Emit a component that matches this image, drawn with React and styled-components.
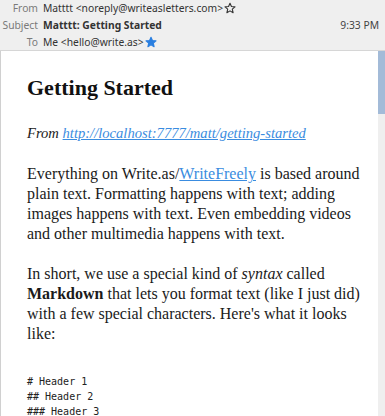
import React from "react";
import styled, { createGlobalStyle } from "styled-components";

const Global = createGlobalStyle`
  html, body { margin: 0; padding: 0; background: #ffffff; }
  body { width: 385px; height: 416px; overflow: hidden; }
`;

const Window = styled.div`
  width: 385px;
  height: 416px;
  display: flex;
  flex-direction: column;
  overflow: hidden;
`;

const Header = styled.div`
  background: #efefef;
  border-bottom: 1px solid #d6d6d6;
  height: 51px;
  font-family: "Noto Sans", "DejaVu Sans", sans-serif;
  font-size: 10.3px;
  color: #3c3c3c;
  box-sizing: border-box;
`;

const HeaderRow = styled.div`
  display: grid;
  grid-template-columns: 38px 1fr auto;
  column-gap: 5px;
  align-items: center;
  height: ${(p) => p.h}px;
  padding-right: 6px;
`;

const Label = styled.span`
  text-align: right;
  color: #7a7a7a;
`;

const Value = styled.span`
  display: flex;
  align-items: center;
  gap: 1px;
  font-weight: ${(p) => (p.bold ? 700 : 400)};
  color: #333;
  white-space: nowrap;
`;

const Time = styled.span`
  color: #444;
`;

const Body = styled.div`
  flex: 1;
  display: flex;
  min-height: 0;
  border-left: 1px solid #d0d0d0;
`;

const Content = styled.div`
  flex: 1;
  padding: 23px 0 0 26px;
  background: #fff;
  color: #1a1a1a;
  overflow: hidden;
`;

const Title = styled.h1`
  font-family: "Liberation Serif", serif;
  font-size: 22px;
  font-weight: 700;
  margin: 0 0 21px;
  line-height: 28px;
  color: #111;
`;

const Byline = styled.p`
  font-family: "Liberation Serif", serif;
  font-style: italic;
  font-size: 14.6px;
  margin: 0 0 21px;
  line-height: 20px;
`;

const Link = styled.a`
  color: #3a8ce0;
  text-decoration: underline;
`;

const Para = styled.p`
  font-family: "Liberation Serif", serif;
  font-size: 16px;
  line-height: 20px;
  margin: 0 0 20px;
  white-space: nowrap;
`;

const Code = styled.pre`
  font-family: "DejaVu Sans Mono", monospace;
  font-size: 10px;
  line-height: 15px;
  margin: 0;
  padding-top: 10px;
  color: #222;
`;

const Scrollbar = styled.div`
  width: 7px;
  background: #efefef;
  display: flex;
  flex-direction: column;
`;

const Thumb = styled.div`
  height: 63px;
  background: #a3bbd8;
`;

const Star = ({ filled }) => (
  <svg width="12" height="12" viewBox="0 0 24 24">
    <path
      d="M12 2.5l2.9 6.6 7.1.6-5.4 4.7 1.6 7-6.2-3.7-6.2 3.7 1.6-7L2 9.7l7.1-.6z"
      fill={filled ? "#2a7fe0" : "none"}
      stroke={filled ? "#2a7fe0" : "#333"}
      strokeWidth="2.2"
      strokeLinejoin="round"
    />
  </svg>
);

export default function App() {
  return (
    <Window>
      <Global />
      <Header>
        <HeaderRow h={15}>
          <Label>From</Label>
          <Value>
            Matttt &lt;noreply@writeasletters.com&gt;
            <Star />
          </Value>
          <span />
        </HeaderRow>
        <HeaderRow h={19}>
          <Label>Subject</Label>
          <Value bold>Matttt: Getting Started</Value>
          <Time>9:33 PM</Time>
        </HeaderRow>
        <HeaderRow h={16}>
          <Label>To</Label>
          <Value>
            Me &lt;hello@write.as&gt;
            <Star filled />
          </Value>
          <span />
        </HeaderRow>
      </Header>
      <Body>
        <Content>
          <Title>Getting Started</Title>
          <Byline>
            From{" "}
            <Link href="#">http://localhost:7777/matt/getting-started</Link>
          </Byline>
          <Para>
            Everything on Write.as/<Link href="#">WriteFreely</Link> is based
            around
            <br />
            plain text. Formatting happens with text; adding
            <br />
            images happens with text. Even embedding videos
            <br />
            and other multimedia happens with text.
          </Para>
          <Para>
            In short, we use a special kind of <em>syntax</em> called
            <br />
            <strong>Markdown</strong> that lets you format text (like I just did)
            <br />
            with a few special characters. Here's what it looks
            <br />
            like:
          </Para>
          <Code>{"# Header 1\n## Header 2\n### Header 3"}</Code>
        </Content>
        <Scrollbar>
          <Thumb />
        </Scrollbar>
      </Body>
    </Window>
  );
}
